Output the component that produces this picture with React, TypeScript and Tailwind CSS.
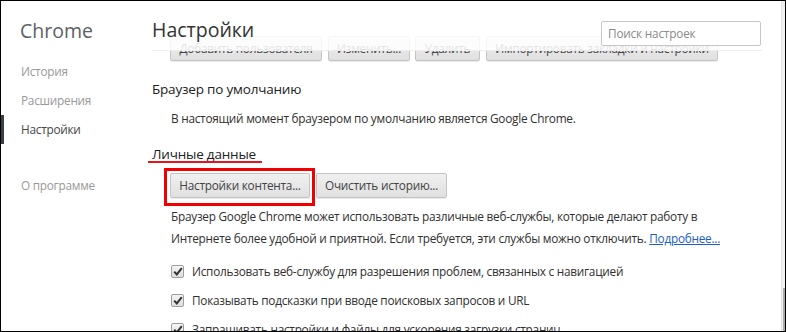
import React from "react";

function Check() {
  return (
    <span className="w-[13px] h-[13px] border border-[#9e9e9e] rounded-[2px] bg-gradient-to-b from-[#f4f4f4] to-[#dedede] flex items-center justify-center shrink-0">
      <svg width="10" height="9" viewBox="0 0 10 9">
        <path d="M1.2 4.6 L3.8 7.4 L8.8 1.2" fill="none" stroke="#333" strokeWidth="2" />
      </svg>
    </span>
  );
}

function Btn({ children, className = "" }: { children: React.ReactNode; className?: string }) {
  return (
    <div
      className={
        "h-[25px] flex items-center justify-center border border-[#c4c4c4] rounded-[2px] bg-gradient-to-b from-[#f0f0f0] to-[#e0e0e0] text-[#444] text-[11.8px] tracking-[-0.25px] whitespace-nowrap shadow-[0_1px_0_rgba(0,0,0,0.08)] " +
        className
      }
    >
      {children}
    </div>
  );
}

export default function App() {
  return (
    <div
      className="w-[786px] h-[332px] border border-black bg-white flex overflow-hidden text-[#303030]"
      style={{ fontFamily: "'Open Sans', 'Noto Sans', sans-serif" }}
    >
      {/* sidebar */}
      <div className="w-[151px] shrink-0 relative">
        <div className="pl-[19px] pt-[17px] text-[19.5px] leading-[26px] text-[#5c6166]">Chrome</div>
        <div className="mt-[13px] flex flex-col text-[11.8px] tracking-[-0.25px]">
          <div className="pl-[20px] h-[29px] flex items-center text-[#999]">История</div>
          <div className="pl-[20px] h-[29px] flex items-center text-[#999]">Расширения</div>
          <div className="pl-[20px] h-[29px] flex items-center text-[#464646] relative">
            <span className="absolute left-0 top-0 w-[3px] h-[29px] bg-[#3a3f47]" />
            Настройки
          </div>
          <div className="pl-[20px] h-[29px] mt-[27px] flex items-center text-[#999]">О программе</div>
        </div>
      </div>

      {/* main */}
      <div className="flex-1 relative">
        <div className="pt-[35px] pl-[18px] flex">
          <Btn className="h-[23px] w-[152px] text-[#9a9a9a]">Добавить пользователя</Btn>
          <Btn className="h-[23px] w-[82px] ml-[6px] text-[#9a9a9a]">Изменить...</Btn>
          <Btn className="h-[23px] w-[65px] ml-[5px] text-[#9a9a9a]">Удалить</Btn>
          <Btn className="h-[23px] w-[232px] ml-[6px] text-[#9a9a9a]">Импортировать закладки и настройки</Btn>
        </div>

        <div className="mt-[18px] text-[13.5px] tracking-[-0.2px] leading-[20px] text-[#222]">Браузер по умолчанию</div>
        <div className="mt-[10px] pl-[19px] text-[11.8px] tracking-[-0.25px] leading-[18px]">
          В настоящий момент браузером по умолчанию является Google Chrome.
        </div>

        <div className="mt-[17px] text-[13.5px] tracking-[-0.2px] leading-[20px] text-[#222] relative w-fit">
          Личные данные
          <span className="absolute left-[-4px] top-[17px] w-[114px] h-[2px] bg-[#e8141b]" />
        </div>

        <div className="mt-[9px] pl-[18px] flex gap-[6px] relative">
          <Btn className="w-[140px]">Настройки контента...</Btn>
          <Btn className="w-[131px]">Очистить историю...</Btn>
          <span className="absolute left-[12px] top-[-5px] w-[151px] h-[38px] border-[3px] border-[#f00000]" />
        </div>

        <div className="mt-[7px] pl-[19px] text-[11.8px] tracking-[-0.25px] leading-[22px] whitespace-nowrap">
          <div>Браузер Google Chrome может использовать различные веб-службы, которые делают работу в</div>
          <div>
            Интернете более удобной и приятной. Если требуется, эти службы можно отключить.{" "}
            <span className="text-[#1a5ec6] underline">Подробнее...</span>
          </div>
        </div>

        <div className="mt-[8px] pl-[19px] text-[11.8px] tracking-[-0.25px]">
          <div className="h-[29px] flex items-center gap-[8px]">
            <Check />
            <span>Использовать веб-службу для разрешения проблем, связанных с навигацией</span>
          </div>
          <div className="h-[29px] flex items-center gap-[8px]">
            <Check />
            <span>Показывать подсказки при вводе поисковых запросов и URL</span>
          </div>
          <div className="h-[29px] flex items-center gap-[8px]">
            <Check />
            <span>Запрашивать настройки и файлы для ускорения загрузки страниц</span>
          </div>
        </div>

        {/* header overlay */}
        <div className="absolute left-0 top-0 w-[610px] h-[50px] bg-white/85 border-b border-[#eeeeee]">
          <div className="absolute left-0 top-[16px] text-[19.5px] leading-[26px] text-[#333]">Настройки</div>
          <div className="absolute left-[449px] top-[20px] w-[160px] h-[25px] border border-[#c6c6c6] rounded-[2px] bg-white flex items-center pl-[6px] text-[11.8px] tracking-[-0.2px] text-[#8a8a8a]">
            Поиск настроек
          </div>
        </div>
      </div>

      {/* scrollbar */}
      <div className="w-[4px] shrink-0 bg-[#f1f1f1] border-l border-[#e2e2e2] relative">
        <div className="absolute right-0 top-[287px] w-[2px] bottom-0 bg-[#a9a9a9]" />
      </div>
    </div>
  );
}
